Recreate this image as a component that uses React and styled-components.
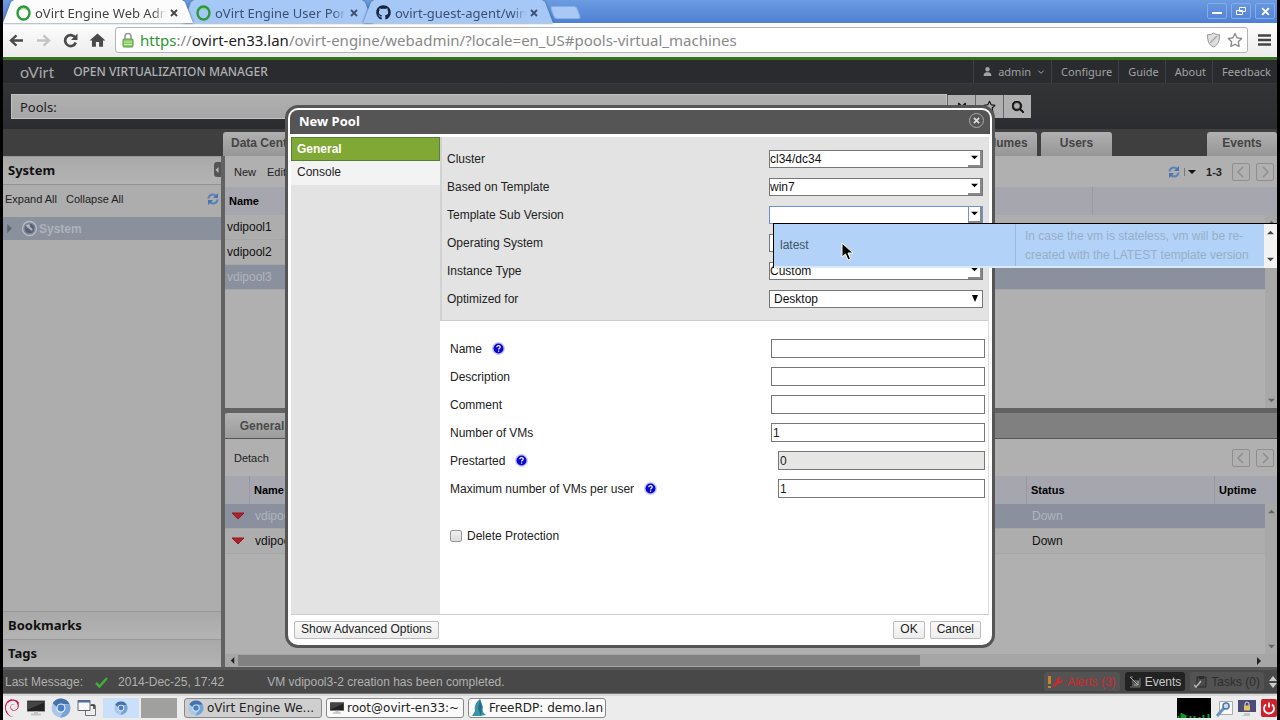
import React from 'react';
import styled, { createGlobalStyle, css } from 'styled-components';
import { FaGithub, FaDebian, FaUser, FaMagnifyingGlass, FaRegStar, FaWrench } from 'react-icons/fa6';
import { MdHome } from 'react-icons/md';

const sans = "'Liberation Sans', Arial, sans-serif";
const ui = "'Noto Sans', 'Open Sans', sans-serif";
const desk = "'DejaVu Sans', Verdana, sans-serif";

const GlobalStyle = createGlobalStyle`
  * { box-sizing: border-box; }
  body { margin: 0; background: #000; font-family: ${sans}; font-size: 12px; color: #222; }
  button, input, select { font: inherit; color: inherit; margin: 0; }
  button { padding: 0; border: 0; background: none; cursor: default; }
  a { color: inherit; text-decoration: none; }
  svg { display: block; flex: none; }
`;

const Desktop = styled.div`
  display: flex;
  flex-direction: column;
  min-height: 100vh;
  padding: 0 3px;
  overflow: hidden;
`;

/* ---------- browser ---------- */

const TabBar = styled.div`
  display: flex;
  align-items: flex-end;
  height: 23px;
  background: linear-gradient(#6b9be0, #4f7fd3);
`;

const TabShape = styled.div`
  width: 190px;
  margin-right: -10px;
  position: relative;
  z-index: ${p => (p.$active ? 2 : 1)};
  filter: drop-shadow(0 0 1px #35568f);
`;

const BrowserTab = styled.div`
  display: flex;
  align-items: center;
  gap: 4px;
  height: 23px;
  padding: 2px 15px 0 13px;
  font: 13px ${ui};
  color: ${p => (p.$active ? '#444' : '#3c5070')};
  background: ${p => (p.$active ? '#fcfcfd' : '#a5c8f7')};
  clip-path: polygon(0 100%, 8px 2px, 11px 0, 179px 0, 182px 2px, 190px 100%);
`;

const TabTitle = styled.span`
  flex: 1;
  overflow: hidden;
  white-space: nowrap;
  mask-image: linear-gradient(to right, #000 90%, transparent);
`;

const NewTab = styled.button`
  width: 27px;
  height: 13px;
  margin: 0 0 4px 9px;
  border: 1px solid #86aeea;
  border-radius: 3px;
  background: #a9c8f5;
  transform: skewX(20deg);
`;

const WindowButtons = styled.div`
  display: flex;
  gap: 4px;
  margin: 0 2px 4px auto;
`;

const WindowButton = styled.button`
  display: grid;
  place-items: center;
  width: 20px;
  height: 16px;
  border: 1px solid #86abea;
  border-radius: 2px;
  color: #fff;
`;

const NavBar = styled.div`
  display: flex;
  align-items: center;
  gap: 5px;
  height: 34px;
  padding: 0 2px;
  background: linear-gradient(#fdfdfd, #ececec);
  color: #4a4a4a;
`;

const NavButton = styled.button`
  display: grid;
  place-items: center;
  width: 22px;
  height: 24px;
  color: ${p => (p.$faded ? '#c4c4c4' : '#4a4a4a')};
`;

const AddressBar = styled.div`
  display: flex;
  align-items: center;
  flex: 1;
  gap: 6px;
  height: 26px;
  margin-left: 2px;
  padding: 0 4px 0 6px;
  border: 1px solid #b4b4b4;
  border-radius: 3px;
  background: #fff;
`;

const Address = styled.div`
  flex: 1;
  font: 15px/24px ${ui};
  color: #888;
  outline: none;
  white-space: nowrap;
`;

const Secure = styled.span`color: #2f9632;`;
const Host = styled.span`color: #222;`;

/* ---------- admin page ---------- */

const Page = styled.div`
  position: relative;
  display: flex;
  flex-direction: column;
  flex: 1;
  border-top: 3px solid #36701c;
  background: #3f3f3f;
`;

const Header = styled.header`
  display: flex;
  align-items: center;
  height: 24px;
  padding-left: 17px;
  background: #292b2f;
  border-bottom: 1px solid #37383b;
  font-family: ${ui};
  color: #a2a2a2;
`;

const Logo = styled.span`
  font: 16px/22px Lato, sans-serif;
  color: #a6a6a6;
`;

const Product = styled.span`
  margin-left: 19px;
  font-size: 12px;
  font-weight: 500;
  color: #b0b0b0;
`;

const HeaderNav = styled.nav`
  display: flex;
  align-self: stretch;
  margin-left: auto;
  font-size: 11px;
`;

const HeaderLink = styled.a`
  display: flex;
  align-items: center;
  gap: 6px;
  padding: 0 6px 0 9px;
  border-left: 1px solid #3d3f43;
`;

const SearchRow = styled.div`
  display: flex;
  align-items: center;
  height: 45px;
  padding: 0 8px;
  background: linear-gradient(#333436, #2b2c2f);
`;

const SearchInput = styled.input`
  width: 75%;
  max-width: 936px;
  height: 25px;
  padding: 0 8px;
  border: 1px solid #c0c0c0;
  background: linear-gradient(#b0b0b0, #a6a6a6);
  font: 13px ${ui};
  color: #1c1c1c;
`;

const SearchButton = styled.button`
  display: grid;
  place-items: center;
  width: 28px;
  height: 23px;
  border-left: 1px solid #666;
  background: #b0b0b0;
  color: #111;
`;

const MainTabs = styled.div`
  display: flex;
  align-items: flex-end;
  gap: 4px;
  height: 27px;
  padding-left: 220px;
`;

const MainTab = styled.button`
  width: ${p => p.$width}px;
  height: 24px;
  padding-bottom: 2px;
  border-radius: 3px 3px 0 0;
  background: linear-gradient(#b0b0b0, #969696);
  font: bold 12px ${sans};
  color: #444;
  white-space: nowrap;
`;

const TabGap = styled.div`
  flex: ${p => (p.$width ? `0 0 ${p.$width}px` : 1)};
`;

const Workspace = styled.div`
  display: grid;
  grid-template-columns: 218px 1fr;
  gap: 4px;
  flex: 1;
  background: #626262;
`;

const Sidebar = styled.aside`
  display: flex;
  flex-direction: column;
  background: #adadad;
`;

const SideTitle = styled.h2`
  display: flex;
  align-items: center;
  justify-content: space-between;
  height: 28px;
  margin: 0;
  padding: 0 0 2px 5px;
  border-top: 1px solid #999;
  background: linear-gradient(#a9a9a9, #b3b3b3);
  font: bold 13px ${ui};
  color: #111;
`;

const Collapse = styled.button`
  width: 7px;
  height: 15px;
  border-radius: 3px 0 0 3px;
  background: #555;
  color: #bbb;
`;

const SideTools = styled.div`
  display: flex;
  align-items: center;
  gap: 9px;
  height: 33px;
  padding: 0 2px 4px;
  border-top: 1px solid #939393;
`;

const TextButton = styled.button`
  font-size: 11px;
  color: #222;
`;

const PushRight = styled.div`
  display: flex;
  align-items: center;
  gap: ${p => p.$gap || 0}px;
  margin-left: auto;
`;

const TreeRow = styled.div`
  display: flex;
  align-items: center;
  height: 23px;
  padding-left: 2px;
  background: #8b909d;
  font: bold 12px ${sans};
  color: #aeb2bb;
`;

const TreeIcon = styled.span`
  padding: 0 1px 0 7px;
`;

const TreeArrow = styled.button`
  color: #5c6270;
`;

const TreeSpace = styled.div`flex: 1;`;

const Panels = styled.main`
  display: flex;
  flex-direction: column;
  min-width: 0;
  gap: 5px;
`;

const Panel = styled.section`
  display: flex;
  flex-direction: column;
  min-width: 0;
  flex: ${p => p.$flex};
  background: #b0b0b0;
`;

const SubTabs = styled.div`
  display: flex;
  height: 26px;
  background: #808080;
  border-bottom: 1px solid #555;
`;

const SubTab = styled.button`
  width: 74px;
  border-radius: 3px 0 0 0;
  background: linear-gradient(#b3b3b3, #9c9c9c);
  font: bold 12px ${sans};
  color: #4b4b4b;
`;

const PanelTools = styled.div`
  display: flex;
  align-items: center;
  gap: 11px;
  height: ${p => p.$height}px;
  padding: 0 3px 0 9px;
`;

const Range = styled.span`font: bold 11px ${sans};`;

const RefreshMenu = styled.span`
  padding-left: 3px;
  border-left: 1px solid #777;
  color: #111;
`;

const PageButton = styled.button`
  display: grid;
  place-items: center;
  width: 18px;
  height: 18px;
  border: 1px solid #8f8f8f;
  border-radius: 2px;
  color: #8f8f8f;
`;

const TableArea = styled.div`
  display: flex;
  flex: 1;
`;

const TableHolder = styled.div`
  flex: 1;
  min-width: 0;
`;

const Table = styled.table`
  width: 100%;
  border-collapse: separate;
  border-spacing: 0;
  table-layout: fixed;
`;

const Col = styled.col`
  width: ${p => (p.$width ? `${p.$width}px` : 'auto')};
`;

const Th = styled.th`
  height: 28px;
  padding: 0 4px;
  border-right: 1px solid #9798a0;
  background: #a5a6ae;
  text-align: left;
  font-size: 11px;
  color: #000;
  &:last-child { border-right: 0; }
`;

const Tr = styled.tr`
  background: ${p => (p.$selected ? '#8a909e' : '#adadad')};
  color: ${p => (p.$selected ? '#b1b5bd' : '#111')};
`;

const Td = styled.td`
  height: 25px;
  padding: 0 ${p => (p.$wide ? 5 : 2)}px;
  border-bottom: 1px solid #a6a6a6;
  white-space: nowrap;
`;

const VScroll = styled.div`
  display: flex;
  flex-direction: column;
  align-items: center;
  justify-content: space-between;
  width: 12px;
  padding: 4px 0;
  border-top: 28px solid #a5a6ae;
  background: #a8a8a8;
  color: #666;
`;

const HScroll = styled.div`
  display: flex;
  align-items: center;
  height: 13px;
  padding: 0 14px 0 4px;
  background: #a6a6a6;
`;

const HThumb = styled.div`
  width: 66%;
  height: 11px;
  margin: 0 auto 0 2px;
  background: #818181;
`;

const StatusBar = styled.footer`
  display: flex;
  align-items: center;
  height: 27px;
  border-top: 3px solid #585858;
  border-bottom: 1px solid #777;
  background: #484848;
  padding-left: 2px;
  color: #b0b0b0;
`;

const StatusText = styled.span`
  margin-left: ${p => p.$space || 0}px;
  margin-right: 12px;
`;

const StatusButton = styled.button`
  display: flex;
  align-items: center;
  justify-content: center;
  gap: 4px;
  height: 19px;
  padding: 0 4px;
  border-radius: 3px;
  background: ${p => (p.$active ? '#222' : '#535353')};
  color: ${p => p.$color};
`;

const AlertIcon = styled.span`
  display: flex;
  align-items: center;
  gap: 2px;
`;

/* ---------- new pool dialog ---------- */

const Overlay = styled.div`
  position: absolute;
  inset: 0;
  z-index: 5;
  display: flex;
  align-items: center;
  justify-content: center;
  padding-bottom: 2px;
`;

const Dialog = styled.div`
  width: 710px;
  padding: 2px;
  border: 3px solid #555;
  border-radius: 13px;
  background: #fff;
`;

const DialogTitle = styled.div`
  display: flex;
  align-items: center;
  justify-content: space-between;
  height: 24px;
  padding: 0 6px 2px 9px;
  border-radius: 8px 8px 0 0;
  background: #555;
  font: bold 13px ${ui};
  color: #fff;
`;

const CloseButton = styled.button`
  display: grid;
  place-items: center;
  width: 15px;
  height: 15px;
  border: 1px solid #aaa;
  border-radius: 50%;
  color: #ddd;
`;

const DialogBody = styled.div`
  display: grid;
  grid-template-columns: 149px 1fr;
  min-height: 478px;
  margin: 3px 1px 0;
  border-bottom: 1px solid #ccc;
`;

const DialogNav = styled.nav`
  display: flex;
  flex-direction: column;
  background: #e3e3e3;
`;

const NavItem = styled.button`
  height: 24px;
  padding: 0 6px 2px;
  text-align: left;
  font-size: 12px;
  color: #222;
  background: #f3f3f3;
  ${p => p.$active && css`
    padding: 0 5px;
    border: 1px solid #56803c;
    background: #7fa834;
    font-weight: bold;
    color: #fff;
  `}
`;

const Form = styled.form`
  display: flex;
  flex-direction: column;
  border-right: 1px solid #ddd;
`;

const FormSection = styled.div`
  padding: ${p => (p.$grey ? '8px 5px 7px' : '14px 3px 0 8px')};
  border-left: 2px solid ${p => (p.$grey ? '#d2d2d2' : '#fff')};
  ${p => p.$grey && css`
    background: #e3e3e3;
    border-bottom: 1px solid #ccc;
  `}
`;

const FormRow = styled.div`
  display: flex;
  align-items: center;
  gap: 10px;
  height: 28px;
`;

const FieldBox = styled.div`
  position: relative;
  width: ${p => (p.$narrow ? 207 : 214)}px;
  margin-left: auto;
`;

const TextInput = styled.input`
  display: block;
  width: 100%;
  height: 19px;
  padding: 0 1px;
  border: 1px solid #777;
  background: ${p => (p.disabled ? '#e6e6e4' : '#fff')};
  color: #222;
`;

const Select = styled.select`
  appearance: none;
  display: block;
  width: 100%;
  height: 18px;
  padding: 0 16px 0 ${p => (p.$plain ? 4 : 0)}px;
  border: 1px solid ${p => (p.$open ? '#6f8fd8' : '#777')};
  border-radius: 0;
  outline: none;
  background: #fff;
  line-height: 16px;
  color: #111;
`;

const SelectArrow = styled.span`
  position: absolute;
  top: 1px;
  right: 1px;
  display: grid;
  place-items: center;
  width: 14px;
  height: 16px;
  pointer-events: none;
  color: #000;
  ${p => !p.$plain && css`
    border: solid #888;
    border-width: 0 2px 2px 0;
  `}
  ${p => p.$open && css`border-left: 1px solid #6f8fd8;`}
`;

const Popup = styled.div`
  position: absolute;
  top: 17px;
  left: 4px;
  z-index: 3;
  display: flex;
  width: 504px;
  border-top: 1px solid #000;
  border-left: 1px solid #000;
  background: #f2f2f2;
`;

const PopupOption = styled.div`
  flex: 1;
  display: grid;
  grid-template-columns: 241px 1fr;
  align-items: center;
  border-bottom: 2px solid #dbe8f8;
  background: #b2d3f7;
  color: #44546a;
`;

const OptionName = styled.span`padding-left: 6px;`;

const OptionHint = styled.span`
  padding: 3px 0 1px 9px;
  border-left: 1px solid #9fbad8;
  line-height: 19px;
  white-space: nowrap;
  color: #98adc9;
`;

const PopupScroll = styled.div`
  display: flex;
  flex-direction: column;
  align-items: center;
  justify-content: space-between;
  width: 13px;
  padding: 5px 0;
  color: #444;
`;

const Pointer = styled.svg`
  position: absolute;
  top: 18px;
  left: 67px;
`;

const CheckLabel = styled.label`
  display: flex;
  align-items: center;
  gap: 5px;
  margin-top: 26px;
`;

const CheckBox = styled.input`
  appearance: none;
  width: 12px;
  height: 12px;
  border: 1px solid #999;
  border-radius: 2px;
  background: linear-gradient(#eee, #ddd);
`;

const DialogFooter = styled.div`
  display: flex;
  align-items: center;
  gap: 4px;
  height: 28px;
  padding: 2px 9px 0 4px;
`;

const PushButton = styled.button`
  height: 18px;
  padding: 0 6px;
  border: 1px solid #bbb;
  border-radius: 2px;
  background: linear-gradient(#fafafa, #ececec);
  line-height: 15px;
  color: #222;
`;

/* ---------- desktop panel ---------- */

const Taskbar = styled.div`
  display: flex;
  align-items: center;
  gap: 6px;
  height: 26px;
  border-top: 2px solid #d8d8d8;
  background: #ececec;
`;

const Pager = styled.div`
  display: grid;
  grid-template-columns: 36px 36px;
  gap: 2px;
  margin-right: 1px;
`;

const Workplace = styled.button`
  display: grid;
  place-items: center;
  height: 20px;
  background: ${p => (p.$active ? '#c9dffa' : '#a0a09e')};
`;

const Tasks = styled.div`
  display: flex;
  gap: 4px;
`;

const Task = styled.button`
  display: flex;
  align-items: center;
  gap: 3px;
  width: 138px;
  height: 20px;
  padding-left: 3px;
  overflow: hidden;
  border: 1px solid #888;
  border-radius: 3px;
  background: ${p => (p.$active ? '#cfcfcf' : '#fafafa')};
  font: 12px ${desk};
  color: #222;
  white-space: nowrap;
`;

/* ---------- drawings ---------- */

const OvirtRing = () => (
  <svg width="15" height="16" viewBox="0 0 15 16">
    <ellipse cx="7.500" cy="8" rx="6" ry="6.500" fill="none" stroke="#2f9a3c" strokeWidth="2.400" />
    <path d="M4 4.600A6 6 0 0 1 11 4.600" fill="none" stroke="#7fcf62" strokeWidth="1" />
  </svg>
);

const Cross = ({ size = 7, stroke = 1.8 }) => (
  <svg width={size} height={size} viewBox="0 0 8 8">
    <path d="M1 1l6 6M7 1l-6 6" stroke="currentColor" strokeWidth={stroke} />
  </svg>
);

const Arrow = ({ back }) => (
  <svg width="15" height="13" viewBox="0 0 16 14">
    <path d={back ? 'M8 1.500L2 7l6 5.500M2.500 7H15' : 'M8 1.500L14 7l-6 5.500M13.500 7H1'} fill="none" stroke="currentColor" strokeWidth="2.500" />
  </svg>
);

const Reload = () => (
  <svg width="15" height="15" viewBox="0 0 15 15">
    <path d="M12.200 4.500A5.500 5.500 0 1 0 12.800 9.500" fill="none" stroke="currentColor" strokeWidth="2.600" />
    <path d="M14.500 .5v6.500H8z" fill="currentColor" />
  </svg>
);

const Padlock = () => (
  <svg width="12" height="16" viewBox="0 0 12 16">
    <path d="M3 8V4.500a3 3 0 0 1 6 0V8" fill="none" stroke="#999" strokeWidth="1.600" />
    <rect x="1" y="7" width="10" height="8" rx="1" fill="#8ccc6a" stroke="#5a9a3c" />
    <path d="M2 10h8M2 12.500h8" stroke="#c3e8ae" />
  </svg>
);

const Shield = () => (
  <svg width="15" height="16" viewBox="0 0 15 16">
    <path d="M7.500 1c2 1.500 4 1.700 6 1.700 0 6-1 10-6 12.300C2.500 12.700 1.500 8.700 1.500 2.700c2 0 4-.2 6-1.700z" fill="#ddd" stroke="#999" />
    <path d="M4 11l7-7" stroke="#aaa" strokeWidth="1.500" />
  </svg>
);

const Triangle = ({ dir = 'down', size = 8 }) => {
  const d = {
    down: 'M0 2h8L4 6z',
    up: 'M0 6h8L4 2z',
    left: 'M6 0v8L2 4z',
    right: 'M2 0v8l4-4z',
    tall: 'M1 0h6L4 7z',
  };
  return <svg width={size} height={size} viewBox="0 0 8 8"><path d={d[dir]} fill="currentColor" /></svg>;
};

const Chevron = ({ dir, size = 12 }) => {
  const d = { left: 'M8 1L3 6l5 5', right: 'M4 1l5 5-5 5', down: 'M2 4l4 4 4-4' };
  return (
    <svg width={size} height={size} viewBox="0 0 12 12">
      <path d={d[dir]} fill="none" stroke="currentColor" strokeWidth="1.500" />
    </svg>
  );
};

const Refresh = () => (
  <svg width="12" height="12" viewBox="0 0 12 12">
    <path d="M1.500 5.500A4.300 4.300 0 0 1 9 3M10.500 6.500A4.300 4.300 0 0 1 3 9" fill="none" stroke="#5b82b8" strokeWidth="2" />
    <path d="M11 0v5H6zM1 12V7h5z" fill="#4b73ad" />
  </svg>
);

const Globe = () => (
  <svg width="17" height="17" viewBox="0 0 17 17">
    <circle cx="8.500" cy="8.500" r="7" fill="#7f8899" stroke="#b8bcc4" strokeWidth="1.400" />
    <circle cx="8.500" cy="8.500" r="4.800" fill="#596377" />
    <path d="M5 5c2-1.500 5-1 4 1s2 1 2.500 3-1.500 2-3 0-3.500-1-3.500-4z" fill="#b0b5be" />
  </svg>
);

const Help = () => (
  <svg width="13" height="13" viewBox="0 0 13 13">
    <circle cx="6.500" cy="6.500" r="6.500" fill="#c8c8ff" />
    <circle cx="6.500" cy="6.500" r="5" fill="#0808d0" />
    <path d="M4.800 5.200c0-2.200 3.600-2 3.400 0 0 1-1.600 1-1.600 2.300M6.600 8.600v1.200" fill="none" stroke="#fff" strokeWidth="1.200" />
  </svg>
);

const Chromium = ({ size = 20 }) => (
  <svg width={size} height={size} viewBox="0 0 20 20">
    <circle cx="10" cy="10" r="9.500" fill="#a9c8ea" />
    <path d="M1.700 5.300A9.500 9.500 0 0 1 18.500 6H10a4.200 4.200 0 0 0-4 3z" fill="#4472aa" />
    <path d="M18.500 6A9.500 9.500 0 0 1 9 19.400l4-6.600A4.300 4.300 0 0 0 13 7z" fill="#76a3d6" />
    <circle cx="10" cy="10" r="4.500" fill="#e9f2fb" />
    <circle cx="10" cy="10" r="3.400" fill="#4a7fc0" />
  </svg>
);

const Monitor = ({ size = 18 }) => (
  <svg width={size} height={size} viewBox="0 0 18 17">
    <rect x="0" y="1" width="18" height="11" fill="#222" stroke="#aaa" strokeWidth=".6" />
    <path d="M1 10l16-7v-1H1z" fill="#454545" />
    <path d="M7 12h4v2h3v2H4v-2h3z" fill="#c4c4c4" />
  </svg>
);

const Windows = () => (
  <svg width="20" height="18" viewBox="0 0 20 18">
    <path d="M8.500 6.500h10v10h-10z" fill="#eee" stroke="#777" />
    <path d="M1 1.500h12v10H1z" fill="#f8f8f8" stroke="#667" />
    <path d="M1 2.500h12" stroke="#4a6ea8" strokeWidth="2" />
    <path d="M14 6h3v4" fill="none" stroke="#333" strokeWidth="1.500" />
  </svg>
);

const RdpFin = () => (
  <svg width="14" height="18" viewBox="0 0 14 18">
    <path d="M8 0c-4 3-6 7-5 12l-3 5h8l6-1c-3-2-4-4-3-8z" fill="#3b94a8" />
    <path d="M8 0L6 9l3 8 1-9z" fill="#276c82" />
  </svg>
);

const LoadGraph = () => (
  <svg width="34" height="20" viewBox="0 0 34 20">
    <path d="M0 0h34v20H0z" fill="#000" />
    <path d="M1.500 20v-2M4.500 20v-5M6.500 20v-4M8.500 20v-3M13.500 20v-2M17.500 20v-2M22.500 20v-1M26.500 20v-3M31.500 20v-4" stroke="#0d9a2c" strokeWidth="2" />
  </svg>
);

const Magnifier = () => (
  <svg width="17" height="17" viewBox="0 0 17 17">
    <path d="M3.500 1.500h13v13h-13z" fill="#fafafa" stroke="#aaa" />
    <path d="M1 16l7-8" stroke="#6b93c6" strokeWidth="3" />
    <circle cx="10" cy="6" r="3" fill="#cfe0f2" stroke="#4c76ae" strokeWidth="1.500" />
  </svg>
);

const LockScreen = () => (
  <svg width="18" height="18" viewBox="0 0 18 18">
    <path d="M0 1h18v12H0z" fill="#4d4b78" />
    <path d="M6 14h6v3H3l3-1z" fill="#c5c5cc" />
    <path d="M7 7V5a2 2 0 0 1 4 0v2" fill="none" stroke="#ddd" />
    <path d="M6 6.500h6v5H6z" fill="#e6c160" />
  </svg>
);

const Power = () => (
  <svg width="16" height="18" viewBox="0 0 16 18">
    <rect width="16" height="18" rx="2" fill="#d0202c" />
    <path d="M5 5.500a5 5 0 1 0 6 0M8 3.500v5" fill="none" stroke="#fff" strokeWidth="1.800" />
  </svg>
);

const EventsIcon = () => (
  <svg width="12" height="12" viewBox="0 0 12 12">
    <path d="M1 1h3M1 11h10V2" fill="none" stroke="#777" />
    <path d="M3 4h8v7H3z" fill="#555" />
    <path d="M1 1l8 8M9 5v4H5" fill="none" stroke="#aaa" />
  </svg>
);

const TasksIcon = () => (
  <svg width="13" height="13" viewBox="0 0 13 13">
    <path d="M3 2h9v10H3z" fill="#4a4a4a" stroke="#2b2b2b" />
    <path d="M5 1h5v3H5z" fill="#2b2b2b" />
    <path d="M0 10l2 2 5-6" fill="none" stroke="#bbb" strokeWidth="1.500" />
  </svg>
);

/* ---------- parts ---------- */

const tabs = [
  { title: 'oVirt Engine Web Admin', icon: <OvirtRing />, active: true },
  { title: 'oVirt Engine User Portal', icon: <OvirtRing /> },
  { title: 'ovirt-guest-agent/windows', icon: <FaGithub size={15} color="#16233f" /> },
];

const Browser = () => (
  <>
    <TabBar>
      {tabs.map((t) => (
        <TabShape key={t.title} $active={t.active}>
          <BrowserTab $active={t.active}>
            {t.icon}
            <TabTitle>{t.title}</TabTitle>
            <button aria-label="Close tab"><Cross size={8} /></button>
          </BrowserTab>
        </TabShape>
      ))}
      <NewTab aria-label="New tab" />
      <WindowButtons>
        <WindowButton aria-label="Minimize"><svg width="10" height="8"><path d="M0 6h10" stroke="#fff" strokeWidth="2" /></svg></WindowButton>
        <WindowButton aria-label="Restore">
          <svg width="10" height="8" viewBox="0 0 10 8"><path d="M3.500 .5h6v4h-6zM.5 3.500h6v4h-6z" fill="none" stroke="#fff" /></svg>
        </WindowButton>
        <WindowButton aria-label="Close"><Cross size={9} /></WindowButton>
      </WindowButtons>
    </TabBar>
    <NavBar>
      <NavButton aria-label="Back"><Arrow back /></NavButton>
      <NavButton $faded aria-label="Forward"><Arrow /></NavButton>
      <NavButton aria-label="Reload"><Reload /></NavButton>
      <NavButton aria-label="Home"><MdHome size={19} /></NavButton>
      <AddressBar>
        <Padlock />
        <Address role="textbox" aria-label="Address" contentEditable suppressContentEditableWarning>
          <Secure>https</Secure>://<Host>ovirt-en33.lan</Host>/ovirt-engine/webadmin/?locale=en_US#pools-virtual_machines
        </Address>
        <Shield />
        <FaRegStar size={16} color="#888" />
      </AddressBar>
      <NavButton aria-label="Menu">
        <svg width="13" height="12" viewBox="0 0 13 12"><path d="M0 1.500h13M0 6h13M0 10.500h13" stroke="#444" strokeWidth="2.400" /></svg>
      </NavButton>
    </NavBar>
  </>
);

const Pages = () => (
  <PushRight $gap={6}>
    <PageButton aria-label="Previous page"><Chevron dir="left" /></PageButton>
    <PageButton aria-label="Next page"><Chevron dir="right" /></PageButton>
  </PushRight>
);

const VBar = () => (
  <VScroll>
    <Triangle dir="up" size={7} />
    <Triangle size={7} />
  </VScroll>
);

const PoolsPanel = () => (
  <Panel $flex="0 0 252px">
    <PanelTools $height={31}>
      <TextButton>New</TextButton>
      <TextButton>Edit</TextButton>
      <PushRight $gap={10}>
        <PushRight $gap={4}>
          <Refresh />
          <RefreshMenu><Triangle /></RefreshMenu>
        </PushRight>
        <Range>1-3</Range>
        <Pages />
      </PushRight>
    </PanelTools>
    <TableArea>
      <TableHolder>
        <Table>
          <colgroup><Col /><Col $width={172} /></colgroup>
          <thead><tr><Th>Name</Th><Th /></tr></thead>
          <tbody>
            {['vdipool1', 'vdipool2', 'vdipool3'].map((name) => (
              <Tr key={name} $selected={name === 'vdipool3'}><Td>{name}</Td><Td /></Tr>
            ))}
          </tbody>
        </Table>
      </TableHolder>
      <VBar />
    </TableArea>
  </Panel>
);

const VmsPanel = () => (
  <Panel $flex="1">
    <SubTabs><SubTab>General</SubTab></SubTabs>
    <PanelTools $height={37}>
      <TextButton>Detach</TextButton>
      <Pages />
    </PanelTools>
    <TableArea>
      <TableHolder>
        <Table>
          <colgroup><Col $width={25} /><Col /><Col $width={188} /><Col $width={50} /></colgroup>
          <thead><tr><Th /><Th>Name</Th><Th>Status</Th><Th>Uptime</Th></tr></thead>
          <tbody>
            {['vdipool3-1', 'vdipool3-2'].map((name, i) => (
              <Tr key={name} $selected={i === 0}>
                <Td $wide>
                  <svg width="15" height="8" viewBox="0 0 15 8"><path d="M2 1h12L8 7z" fill="#b3202a" stroke="#8d1a20" /></svg>
                </Td>
                <Td $wide>{name}</Td>
                <Td $wide>Down</Td>
                <Td />
              </Tr>
            ))}
          </tbody>
        </Table>
      </TableHolder>
      <VBar />
    </TableArea>
    <HScroll>
      <Triangle dir="left" size={7} />
      <HThumb />
      <Triangle dir="right" />
    </HScroll>
  </Panel>
);

const SelectField = ({ id, label, value, plain, open, children }) => (
  <FormRow>
    <label htmlFor={id}>{label}</label>
    <FieldBox>
      <Select id={id} defaultValue={value} $plain={plain} $open={open}>
        <option value={value}>{value}</option>
      </Select>
      <SelectArrow $plain={plain} $open={open}>
        <Triangle dir={plain ? 'tall' : 'down'} size={plain ? 8 : 7} />
      </SelectArrow>
      {children}
    </FieldBox>
  </FormRow>
);

const InputField = ({ id, label, value, help, narrow, disabled }) => (
  <FormRow>
    <label htmlFor={id}>{label}</label>
    {help && <Help />}
    <FieldBox $narrow={narrow}>
      <TextInput id={id} defaultValue={value} disabled={disabled} />
    </FieldBox>
  </FormRow>
);

const SubVersionPopup = () => (
  <Popup role="listbox" aria-label="Template Sub Version">
    <PopupOption role="option" aria-selected="true">
      <OptionName>latest</OptionName>
      <OptionHint>In case the vm is stateless, vm will be re-<br />created with the LATEST template version</OptionHint>
    </PopupOption>
    <PopupScroll>
      <Triangle dir="up" size={7} />
      <Triangle size={7} />
    </PopupScroll>
    <Pointer width="14" height="20" viewBox="0 0 14 20">
      <path d="M1 1v14l3.500-3 2.500 6 2.500-1-2.500-6H12z" fill="#000" stroke="#fff" />
    </Pointer>
  </Popup>
);

const NewPoolDialog = () => (
  <Overlay>
    <Dialog role="dialog" aria-label="New Pool">
      <DialogTitle>
        New Pool
        <CloseButton aria-label="Close"><Cross stroke={2} /></CloseButton>
      </DialogTitle>
      <DialogBody>
        <DialogNav>
          <NavItem $active>General</NavItem>
          <NavItem>Console</NavItem>
        </DialogNav>
        <Form>
          <FormSection $grey>
            <SelectField id="cluster" label="Cluster" value="cl34/dc34" />
            <SelectField id="template" label="Based on Template" value="win7" />
            <SelectField id="subversion" label="Template Sub Version" value="" open>
              <SubVersionPopup />
            </SelectField>
            <SelectField id="os" label="Operating System" value="" />
            <SelectField id="instance" label="Instance Type" value="Custom" />
            <SelectField id="optimized" label="Optimized for" value="Desktop" plain />
          </FormSection>
          <FormSection>
            <InputField id="name" label="Name" help />
            <InputField id="description" label="Description" />
            <InputField id="comment" label="Comment" />
            <InputField id="vms" label="Number of VMs" value="1" />
            <InputField id="prestarted" label="Prestarted" value="0" help narrow disabled />
            <InputField id="maxvms" label="Maximum number of VMs per user" value="1" help narrow />
            <CheckLabel>
              <CheckBox type="checkbox" />
              Delete Protection
            </CheckLabel>
          </FormSection>
        </Form>
      </DialogBody>
      <DialogFooter>
        <PushButton>Show Advanced Options</PushButton>
        <PushRight $gap={5}>
          <PushButton>OK</PushButton>
          <PushButton>Cancel</PushButton>
        </PushRight>
      </DialogFooter>
    </Dialog>
  </Overlay>
);

const App = () => (
  <Desktop>
    <GlobalStyle />
    <Browser />
    <Page>
      <Header>
        <Logo>oVirt</Logo>
        <Product>OPEN VIRTUALIZATION MANAGER</Product>
        <HeaderNav>
          <HeaderLink href="#admin"><FaUser size={9} />admin<Chevron dir="down" size={8} /></HeaderLink>
          <HeaderLink href="#configure">Configure</HeaderLink>
          <HeaderLink href="#guide">Guide</HeaderLink>
          <HeaderLink href="#about">About</HeaderLink>
          <HeaderLink href="#feedback">Feedback</HeaderLink>
        </HeaderNav>
      </Header>
      <SearchRow>
        <SearchInput aria-label="Search" defaultValue="Pools:" />
        <SearchButton aria-label="Clear"><Cross size={10} stroke={1.5} /></SearchButton>
        <SearchButton aria-label="Bookmark"><FaRegStar size={13} /></SearchButton>
        <SearchButton aria-label="Search"><FaMagnifyingGlass size={12} stroke="currentColor" strokeWidth={30} /></SearchButton>
      </SearchRow>
      <MainTabs>
        <MainTab $width={90}>Data Centers</MainTab>
        <TabGap />
        <MainTab $width={68}>Volumes</MainTab>
        <MainTab $width={71}>Users</MainTab>
        <TabGap $width={87} />
        <MainTab $width={70}>Events</MainTab>
      </MainTabs>
      <Workspace>
        <Sidebar>
          <SideTitle>System<Collapse aria-label="Collapse"><Triangle dir="left" size={6} /></Collapse></SideTitle>
          <SideTools>
            <TextButton>Expand All</TextButton>
            <TextButton>Collapse All</TextButton>
            <PushRight><Refresh /></PushRight>
          </SideTools>
          <TreeRow>
            <TreeArrow aria-label="Expand System"><Triangle dir="right" size={9} /></TreeArrow>
            <TreeIcon><Globe /></TreeIcon>
            System
          </TreeRow>
          <TreeSpace />
          <SideTitle>Bookmarks</SideTitle>
          <SideTitle>Tags</SideTitle>
        </Sidebar>
        <Panels>
          <PoolsPanel />
          <VmsPanel />
        </Panels>
      </Workspace>
      <StatusBar>
        <StatusText>Last Message:</StatusText>
        <svg width="13" height="12" viewBox="0 0 13 12"><path d="M1 7l3.500 3.500L12 2" fill="none" stroke="#3fae3a" strokeWidth="2.500" /></svg>
        <StatusText $space={10}>2014-Dec-25, 17:42</StatusText>
        <StatusText $space={31}>VM vdipool3-2 creation has been completed.</StatusText>
        <PushRight $gap={5}>
          <StatusButton $color="#d3282c">
            <AlertIcon>
              <svg width="3" height="12"><path d="M0 0h3v8H0zM0 10h3v2H0z" fill="#c4842c" /></svg>
              <FaWrench size={10} />
            </AlertIcon>
            Alerts (3)
          </StatusButton>
          <StatusButton $active $color="#c8c8c8"><EventsIcon />Events</StatusButton>
          <StatusButton $color="#2e2e2e"><TasksIcon />Tasks (0)</StatusButton>
          <svg width="8" height="14" viewBox="0 0 8 14"><path d="M0 6l4-5 4 5zM0 8l4 5 4-5z" fill="#ccc" /></svg>
        </PushRight>
      </StatusBar>
      <NewPoolDialog />
    </Page>
    <Taskbar>
      <FaDebian size={18} color="#c8104c" />
      <Monitor />
      <Chromium />
      <Windows />
      <Pager>
        <Workplace $active aria-label="Desktop 1"><Chromium size={14} /></Workplace>
        <Workplace aria-label="Desktop 2" />
      </Pager>
      <Tasks>
        <Task $active><Chromium size={16} />oVirt Engine We...</Task>
        <Task><Monitor size={14} />root@ovirt-en33:~</Task>
        <Task><RdpFin />FreeRDP: demo.lan</Task>
      </Tasks>
      <PushRight $gap={5}>
        <LoadGraph />
        <Magnifier />
        <LockScreen />
        <Power />
      </PushRight>
    </Taskbar>
  </Desktop>
);

export default App;
